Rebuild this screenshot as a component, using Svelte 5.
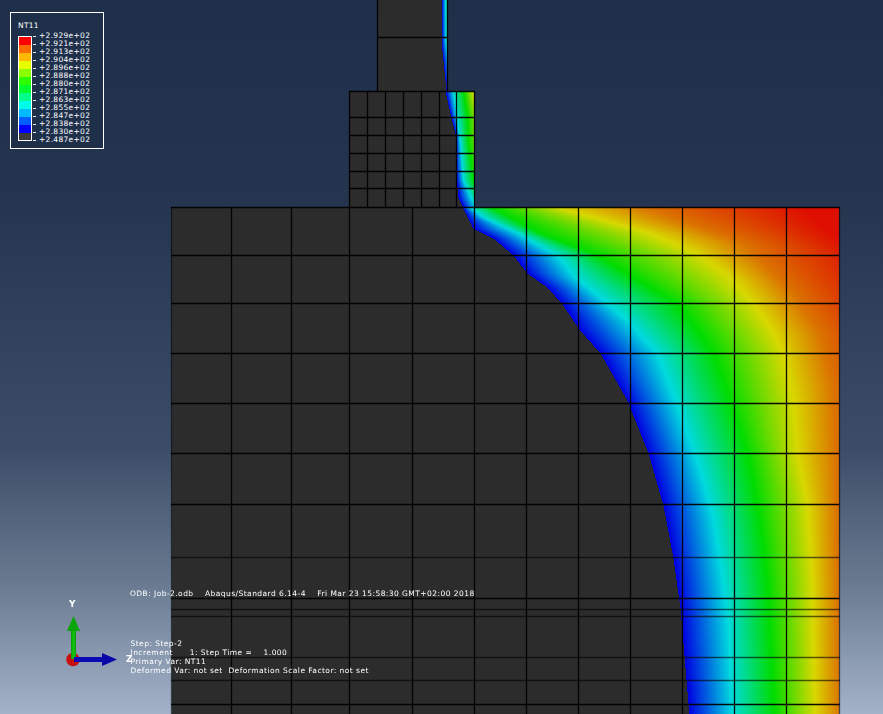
<script>
  import { onMount } from 'svelte';

  const W = 883, H = 714;
  let canvas;

  // Mesh definition
  const mainV = [171, 231, 291, 349, 412, 474, 526, 578, 630, 682, 734, 786, 839];
  const mainH = [207, 255, 303, 353, 403, 453, 504, 557, 598, 609, 616, 657, 680, 704];
  const dimH = [557, 609, 616, 657, 680];
  const neckV = [349, 367, 385, 403, 421, 439, 456, 474];
  const neckH = [91, 117, 135, 153, 171, 188];
  const stemV = [377, 447];

  // Contour regions: each isoline is a list of [y, x] points
  const regions = [
    {
      x0: 377, x1: 447, y0: 0, y1: 91, stops: [0, 1, 1.6],
      lines: [
        [[0, 441.5], [45, 441.5], [60, 443], [80, 445], [91, 446]],
        [[0, 445], [40, 445.5], [60, 448], [91, 451]],
        [[0, 448], [40, 449], [91, 456]]
      ]
    },
    {
      x0: 349, x1: 474, y0: 91, y1: 207, stops: [0, 1, 2, 3],
      lines: [
        [[91, 445], [113, 450], [133, 455], [173, 455.5], [197, 458], [207, 463]],
        [[91, 453], [115, 456], [143, 460], [180, 463], [200, 472], [207, 476]],
        [[91, 463], [115, 467], [143, 468], [180, 473], [200, 483], [207, 490]],
        [[91, 473], [115, 478], [143, 482], [180, 487], [200, 500], [207, 510]]
      ]
    },
    {
      x0: 172, x1: 839, y0: 207, y1: 714, stops: [0, 1, 2, 3, 3.5, 4],
      lines: [
        [[207, 462], [228, 473], [238, 493], [255, 513], [273, 527], [287, 547], [305, 563], [328, 578], [353, 600], [400, 627], [453, 648], [505, 663], [558, 673], [607, 680], [643, 683], [703, 688], [714, 689]],
        [[207, 469], [217, 483], [233, 518], [245, 538], [255, 557], [277, 575], [303, 607], [323, 630], [353, 657], [400, 675], [453, 694], [463, 698], [517, 713], [577, 722], [617, 727], [667, 730], [714, 732]],
        [[207, 490], [210, 497], [233, 540], [253, 593], [277, 633], [303, 677], [333, 700], [353, 713], [400, 730], [453, 747], [477, 752], [523, 760], [583, 767], [637, 770], [714, 774]],
        [[207, 558], [210, 567], [233, 650], [255, 700], [277, 730], [303, 753], [333, 773], [353, 783], [400, 793], [453, 797], [503, 807], [583, 812], [650, 813], [714, 815]],
        [[207, 645], [243, 743], [293, 793], [333, 820], [387, 833], [460, 836], [600, 838], [714, 840]],
        [[207, 800], [255, 860], [300, 880], [400, 920], [714, 970]]
      ]
    }
  ];

  const ramp = [
    [0, 0, 225],
    [0, 218, 222],
    [0, 220, 0],
    [216, 216, 0],
    [222, 14, 0]
  ];

  function colourAt(t) {
    const c = Math.max(0, Math.min(3.9999, t));
    const i = Math.floor(c);
    const f = c - i;
    return ramp[i].map((v, k) => v + (ramp[i + 1][k] - v) * f);
  }

  function xOnLine(line, y) {
    if (y <= line[0][0]) return line[0][1];
    for (let i = 1; i < line.length; i++) {
      if (y <= line[i][0]) {
        const [y0, x0] = line[i - 1];
        const [y1, x1] = line[i];
        return x0 + ((x1 - x0) * (y - y0)) / (y1 - y0);
      }
    }
    return line[line.length - 1][1];
  }

  onMount(() => {
    const ctx = canvas.getContext('2d');
    const img = ctx.createImageData(W, H);
    const px = img.data;
    for (const r of regions) {
      for (let y = r.y0; y < r.y1; y++) {
        const xs = r.lines.map((l) => xOnLine(l, y));
        for (let x = r.x0; x < r.x1; x++) {
          let rgb = [44, 44, 44];
          if (x >= xs[0]) {
            let t = r.stops[r.stops.length - 1];
            for (let k = 1; k < xs.length; k++) {
              if (x < xs[k]) {
                t = r.stops[k - 1] + ((r.stops[k] - r.stops[k - 1]) * (x - xs[k - 1])) / (xs[k] - xs[k - 1]);
                break;
              }
            }
            rgb = colourAt(t);
          }
          const o = (y * W + x) * 4;
          px[o] = rgb[0];
          px[o + 1] = rgb[1];
          px[o + 2] = rgb[2];
          px[o + 3] = 255;
        }
      }
    }
    ctx.putImageData(img, 0, 0);
  });

  const legend = [
    ['#ff0000', '+2.929e+02'],
    ['#ff6a00', '+2.921e+02'],
    ['#ffb900', '+2.913e+02'],
    ['#e8ff00', '+2.904e+02'],
    ['#8bff00', '+2.896e+02'],
    ['#2eff00', '+2.888e+02'],
    ['#00ff2e', '+2.880e+02'],
    ['#00ff8b', '+2.871e+02'],
    ['#00ffe8', '+2.863e+02'],
    ['#00b9ff', '+2.855e+02'],
    ['#005dff', '+2.847e+02'],
    ['#0000ff', '+2.838e+02'],
    ['#3a3a3a', '+2.830e+02']
  ];
</script>

<div class="viewport">
  <canvas bind:this={canvas} width={W} height={H}></canvas>

  <svg class="mesh" width={W} height={H} viewBox="0 0 {W} {H}">
    {#each mainV as x}
      <line x1={x + 0.5} x2={x + 0.5} y1="207" y2="714" class:dim={x === 171 || x === 839} />
    {/each}
    {#each mainH as y}
      <line x1="171" x2="840" y1={y + 0.5} y2={y + 0.5} class:dim={dimH.includes(y)} />
    {/each}
    {#each neckV as x}
      <line x1={x + 0.5} x2={x + 0.5} y1="91" y2="207" />
    {/each}
    {#each neckH as y}
      <line x1="349" x2="475" y1={y + 0.5} y2={y + 0.5} />
    {/each}
    {#each stemV as x}
      <line x1={x + 0.5} x2={x + 0.5} y1="0" y2="91" />
    {/each}
    <line x1="377" x2="448" y1="37.5" y2="37.5" />
  </svg>

  <svg class="triad" width="130" height="80" viewBox="50 600 130 80">
    <defs>
      <linearGradient id="shaftG" x1="0" x2="1" y1="0" y2="0">
        <stop offset="0" stop-color="#0a960a" />
        <stop offset="0.5" stop-color="#12c812" />
        <stop offset="1" stop-color="#0a960a" />
      </linearGradient>
    </defs>
    <circle cx="73" cy="659.5" r="6.8" fill="#c81010" />
    <rect x="71" y="631" width="5" height="28" fill="url(#shaftG)" />
    <path d="M73.5 616 L80 631 L67 631 Z" fill="#0aa50a" />
    <rect x="74" y="657" width="29" height="5" fill="#0a0ab4" />
    <path d="M102 653 L117 659.5 L102 666 Z" fill="#0808a8" />
  </svg>

  <span class="axis ay">Y</span>
  <span class="axis az">Z</span>

  <div class="legend">
    <div class="title">NT11</div>
    <div class="scale">
      <div class="swatches">
        {#each legend as row}
          <i style="background:{row[0]}"></i>
        {/each}
      </div>
      <div class="labels">
        {#each legend as row}
          <span>{row[1]}</span>
        {/each}
        <span>+2.487e+02</span>
      </div>
    </div>
  </div>

  <div class="odb">ODB: Job-2.odb    Abaqus/Standard 6.14-4    Fri Mar 23 15:58:30 GMT+02:00 2018</div>
  <div class="status">
    <div>Step: Step-2</div>
    <div>Increment      1: Step Time =    1.000</div>
    <div>Primary Var: NT11</div>
    <div>Deformed Var: not set  Deformation Scale Factor: not set</div>
  </div>
</div>

<style>
  :global(body) {
    margin: 0;
    background: #1e2f4a;
  }
  .viewport {
    position: relative;
    width: 883px;
    height: 714px;
    overflow: hidden;
    font-family: "DejaVu Sans", sans-serif;
    color: #fff;
    background: linear-gradient(
      to bottom,
      #1e2f4a 0,
      #25354f 200px,
      #3c4d68 450px,
      #68798f 580px,
      #a3b2c9 714px
    );
  }
  canvas,
  .mesh,
  .triad {
    position: absolute;
    left: 0;
    top: 0;
    display: block;
  }
  .triad {
    left: 50px;
    top: 600px;
  }
  .mesh line {
    stroke: #000;
    stroke-width: 1.3;
    stroke-opacity: 0.95;
  }
  .mesh line.dim {
    stroke-opacity: 0.6;
  }
  .axis {
    position: absolute;
    font-size: 9px;
    font-weight: 700;
    line-height: 10px;
  }
  .ay {
    left: 69px;
    top: 599px;
  }
  .az {
    left: 126px;
    top: 654px;
  }
  .legend {
    position: absolute;
    left: 10px;
    top: 12px;
    border: 1px solid #fff;
    background: #1e2f4a;
    padding: 9px 0 0 7px;
    box-sizing: content-box;
    height: 126px;
    width: 85px;
    font-size: 7.5px;
    line-height: 8px;
  }
  .title {
    height: 8px;
    margin-bottom: 2px;
    letter-spacing: 0.3px;
  }
  .scale {
    display: flex;
  }
  .swatches {
    display: flex;
    flex-direction: column;
    width: 12px;
    height: 103px;
    border: 1px solid #fff;
    margin-top: 3.5px;
    box-sizing: content-box;
    overflow: hidden;
  }
  .swatches i {
    display: block;
    flex: 0 0 8px;
    height: 8px;
  }
  .labels {
    display: flex;
    flex-direction: column;
    margin-left: 7px;
  }
  .labels span {
    position: relative;
    height: 8px;
    display: block;
    letter-spacing: 0.3px;
    white-space: pre;
  }
  .labels span::before {
    content: "";
    position: absolute;
    left: -6px;
    top: 4px;
    width: 3px;
    height: 1px;
    background: #fff;
  }
  .odb,
  .status {
    position: absolute;
    left: 130px;
    font-size: 7.5px;
    line-height: 9px;
    letter-spacing: 0.45px;
  }
  .odb,
  .status div {
    white-space: pre;
  }
  .odb {
    top: 589px;
  }
  .status {
    top: 639px;
    left: 130.5px;
  }
</style>
